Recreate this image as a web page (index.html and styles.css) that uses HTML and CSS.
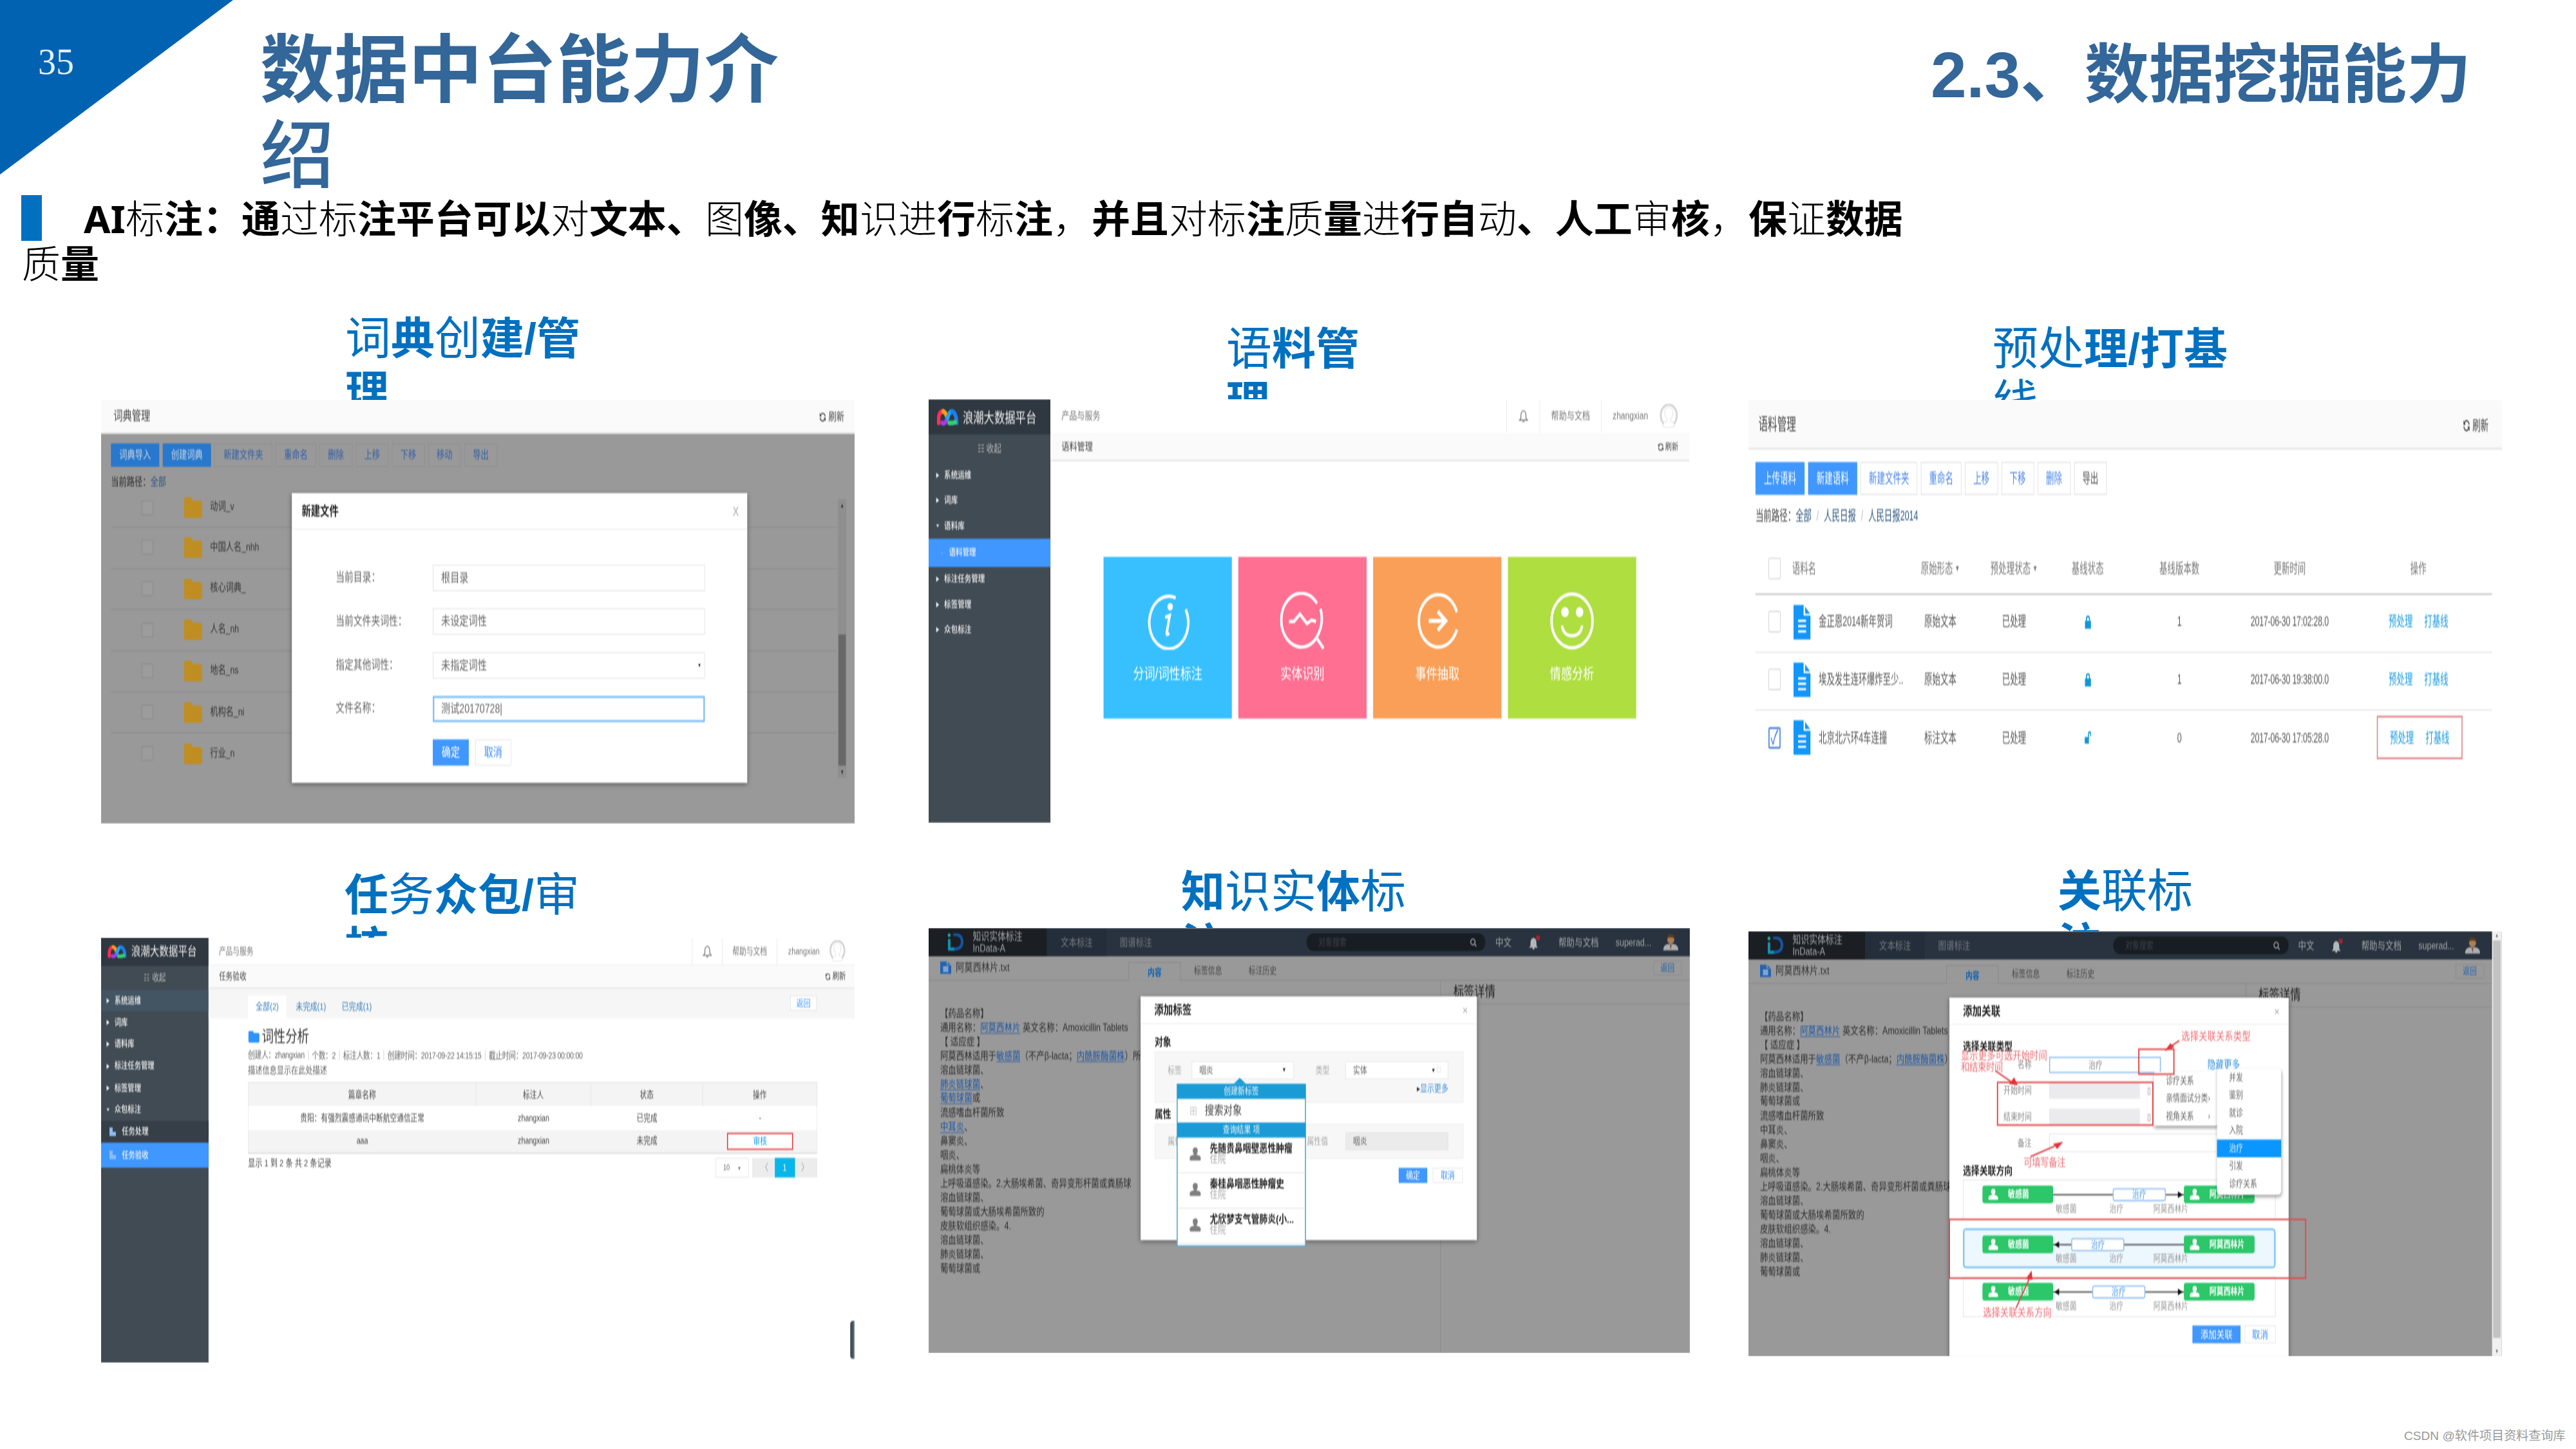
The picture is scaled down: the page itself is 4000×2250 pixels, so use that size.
FILE: index.html
```html
<!DOCTYPE html>
<html lang="zh-CN">
<head>
<meta charset="utf-8">
<title>数据中台能力介绍</title>
<link rel="stylesheet" href="styles.css">
</head>
<body>
<svg class="defs" width="0" height="0" aria-hidden="true">
  <symbol id="folder" viewBox="0 0 37 30"><path d="M0 4q0-4 4-4h9q3 0 4 3l1 2h15q4 0 4 4v17q0 4-4 4H4q-4 0-4-4z" fill="currentColor"/></symbol>
  <symbol id="refresh" viewBox="0 0 16 16"><path d="M14 7A6 6 0 0 0 3 4.500M2 9a6 6 0 0 0 11 2.500" fill="none" stroke="currentColor" stroke-width="2"/><path d="M1 1v6h5zM15 15V9h-5z" fill="currentColor"/></symbol>
  <symbol id="bell" viewBox="0 0 20 20"><path d="M10 2q-5 1-5 7v4l-3 3h16l-3-3V9q0-6-5-7zM8 18h4" fill="none" stroke="currentColor" stroke-width="1.600"/></symbol>
  <symbol id="bellfull" viewBox="0 0 24 22"><path d="M11 4q-6 1-6 8v4l-3 3h18l-3-3v-4q0-7-6-8z" fill="#b4b8bb"/><circle cx="11" cy="20" r="2" fill="#b4b8bb"/><circle cx="20" cy="4" r="4" fill="#a8232f"/></symbol>
  <symbol id="avatar" viewBox="0 0 40 36" preserveAspectRatio="none"><circle cx="20" cy="17" r="16" fill="#fff" stroke="#d2d2d2" stroke-width="3.500"/><path d="M8 33q2-7 8-7v-4q-5-4-4-11 2-6 8-6t8 6q1 7-4 11v4q6 0 8 7-12 4-24 0z" fill="#fff" stroke="#ddd"/></symbol>
  <symbol id="brand" viewBox="0 0 44 26" preserveAspectRatio="none"><g fill="none" stroke-width="7" stroke-linecap="round"><path d="M4 21V14Q5 4 13 4" stroke="#ff2f55"/><path d="M13 4q6 2 8 10" stroke="#ff9c1a"/><path d="M11 21q6 3 10-7" stroke="#a03df0"/><path d="M22 14q3-10 9-10" stroke="#18a8f5"/><path d="M31 4q8 2 9 17" stroke="#1c7ff0"/><path d="M25 21q6 1 12-1" stroke="#35d06c"/></g></symbol>
  <symbol id="idlogo" viewBox="0 0 34 28" preserveAspectRatio="none"><path d="M4 9v16h12q14-1 14-12Q29 2 16 2h-4" fill="none" stroke="#1456a3" stroke-width="5"/><path d="M4 9v16h10" fill="none" stroke="#1393ad" stroke-width="5"/><circle cx="4" cy="3" r="3" fill="#1fa89b"/></symbol>
  <symbol id="man" viewBox="0 0 32 28" preserveAspectRatio="none"><path d="M1 27q0-9 9-10h12q9 1 9 10z" fill="#aaaeb0"/><circle cx="16" cy="10" r="7" fill="#a8805c"/><path d="M8 9q0-8 8-8t8 8q-8-5-16 0z" fill="#5b3a1e"/><path d="M14 18h4l-2 8z" fill="#8f4530"/></symbol>
  <symbol id="doc" viewBox="0 0 34 39" preserveAspectRatio="none"><path d="M0 0h20v12h14v27H0z" fill="currentColor"/><path d="M23 2l10 8H23z" fill="currentColor"/><path d="M9 18h16M9 24h16M9 30h16" stroke="#fff" stroke-width="2.500"/></symbol>
  <symbol id="person" viewBox="0 0 24 20" preserveAspectRatio="none"><path d="M12 0q5 0 5 5 0 4-3 6 9 1 9 5v2q0 2-2 2H3q-2 0-2-2v-2q0-4 9-5-3-2-3-6 0-5 5-5z" fill="currentColor"/></symbol>
</svg>

<main class="slide">
  <header class="head">
    <div class="corner"><span>35</span></div>
    <h1>数据中台能力介<br><i>绍</i></h1>
    <h2>2.3、数据挖掘能力</h2>
  </header>

  <p class="intro">AI<i>标</i>注<span class="mid">：</span>通<i>过标</i>注平台可以<i>对</i>文本、<i>图</i>像、知<i>识进</i>行<i>标</i>注<i>，</i>并且<i>对标</i>注<i>质</i>量<i>进</i>行自<i>动</i>、人工<i>审</i>核<i>，</i>保<i>证</i>数据<br><i>质</i>量</p>

  <section class="gallery">

    <figure class="fig-dict">
      <figcaption><i>词</i>典<i>创</i>建/管<br>理</figcaption>
      <div class="frame"><div class="screen dict">
        <div class="pagebar"><span>词典管理</span><span class="refresh"><svg><use href="#refresh"/></svg>刷新</span></div>
        <div class="tools">
          <b>词典导入</b><b>创建词典</b><span class="w5">新建文件夹</span><span class="w3">重命名</span><span>删除</span><span>上移</span><span>下移</span><span>移动</span><span>导出</span>
        </div>
        <div class="path">当前路径：<em>全部</em></div>
        <div class="listwrap">
          <ul class="folders">
            <li><s></s><svg><use href="#folder"/></svg>动词_v<u>0</u></li>
            <li><s></s><svg><use href="#folder"/></svg>中国人名_nhh<u>0</u></li>
            <li><s></s><svg><use href="#folder"/></svg>核心词典_<u>0</u></li>
            <li><s></s><svg><use href="#folder"/></svg>人名_nh<u>0</u></li>
            <li><s></s><svg><use href="#folder"/></svg>地名_ns<u>0</u></li>
            <li><s></s><svg><use href="#folder"/></svg>机构名_ni<u>0</u></li>
            <li><s></s><svg><use href="#folder"/></svg>行业_n<u>0</u></li>
          </ul>
          <div class="scroll"><span>▲</span><b></b><span>▼</span></div>
        </div>
        <div class="modal">
          <div class="modal-head"><b>新建文件</b><span>X</span></div>
          <div class="form">
            <label>当前目录：<span>根目录</span></label>
            <label>当前文件夹词性：<span>未设定词性</span></label>
            <label>指定其他词性：<span>未指定词性<small>▼</small></span></label>
            <label>文件名称：<span class="focus">测试20170728|</span></label>
            <div class="acts"><b>确定</b><span>取消</span></div>
          </div>
        </div>
      </div></div>
    </figure>

    <figure class="fig-corpus">
      <figcaption><i>语</i>料管<br>理</figcaption>
      <div class="frame"><div class="screen console corpus">
        <aside>
          <div class="brand"><svg><use href="#brand"/></svg>浪潮大数据平台</div>
          <div class="fold">☷ 收起</div>
          <ul>
            <li>系统运维</li><li>词库</li><li class="open">语料库</li><li class="on"><small>▫</small>语料管理</li><li>标注任务管理</li><li>标签管理</li><li>众包标注</li>
          </ul>
        </aside>
        <div class="main">
          <div class="topbar"><span>产品与服务</span><span class="bell"><svg><use href="#bell"/></svg></span><span class="help">帮助与文档</span><span class="user">zhangxian<svg><use href="#avatar"/></svg></span></div>
          <div class="pagebar"><span>语料管理</span><span class="refresh"><svg><use href="#refresh"/></svg>刷新</span></div>
          <div class="tiles">
            <div class="blue"><svg viewBox="0 0 90 86" preserveAspectRatio="none"><path d="M62 9A39 39 0 1 0 82 26" transform="translate(-1 0)"/><path d="M40 38l9-3-6 26q0 4 5 0"/><circle cx="50" cy="22" r="3" class="dot"/></svg>分词/词性标注</div>
            <div class="pink"><svg viewBox="0 0 90 86" preserveAspectRatio="none"><path d="M74 17A40 40 0 1 0 73 68M81 25q8 22-8 43l14 16"/><path d="M18 44h10l12-11 14 14 9-5 9 2"/></svg>实体识别</div>
            <div class="orange"><svg viewBox="0 0 90 86" preserveAspectRatio="none"><path d="M84 30A39 39 0 1 0 84 56"/><path d="M28 43h34M46 29l16 14-16 14" class="thick"/></svg>事件抽取</div>
            <div class="green"><svg viewBox="0 0 90 86" preserveAspectRatio="none"><ellipse cx="45" cy="43" rx="41" ry="40"/><path d="M25 50q3 15 20 15t20-15"/><ellipse cx="31" cy="30" rx="5" ry="5" class="dot"/><ellipse cx="60" cy="30" rx="5" ry="5" class="dot"/></svg>情感分析</div>
          </div>
        </div>
      </div></div>
    </figure>

    <figure class="fig-base">
      <figcaption><i>预处</i>理/打基<br><i>线</i></figcaption>
      <div class="frame"><div class="screen base">
        <div class="pagebar"><span>语料管理</span><span class="refresh"><svg><use href="#refresh"/></svg>刷新</span></div>
        <div class="tools">
          <b>上传语料</b><b>新建语料</b><span class="w5">新建文件夹</span><span class="w3">重命名</span><span>上移</span><span>下移</span><span>删除</span><span class="dim">导出</span>
        </div>
        <div class="path">当前路径：<em>全部</em><q>/</q><em>人民日报</em><q>/</q><em>人民日报2014</em></div>
        <div class="grid ghead"><s></s><span>语料名</span><span>原始形态 <small>▼</small></span><span>预处理状态 <small>▼</small></span><span>基线状态</span><span>基线版本数</span><span>更新时间</span><span>操作</span></div>
        <div class="grid"><s></s><span><svg><use href="#doc"/></svg>金正恩2014新年贺词</span><span>原始文本</span><span>已处理</span><span><svg class="lock" viewBox="0 0 12 15"><path d="M0 6h12v9H0z"/><path d="M3 7V4q0-3 3-3t3 3v3" class="ring"/></svg></span><span>1</span><span class="time">2017-06-30 17:02:28.0</span><span class="ops"><em>预处理</em><em>打基线</em></span></div>
        <div class="grid"><s></s><span><svg><use href="#doc"/></svg>埃及发生连环爆炸至少..</span><span>原始文本</span><span>已处理</span><span><svg class="lock" viewBox="0 0 12 15"><path d="M0 6h12v9H0z"/><path d="M3 7V4q0-3 3-3t3 3v3" class="ring"/></svg></span><span>1</span><span class="time">2017-06-30 19:38:00.0</span><span class="ops"><em>预处理</em><em>打基线</em></span></div>
        <div class="grid"><s class="ticked">✓</s><span><svg><use href="#doc"/></svg>北京北六环4车连撞</span><span>标注文本</span><span>已处理</span><span><svg class="lock" viewBox="0 0 14 15"><path d="M0 7h9v8H0z"/><path d="M8 8V4q0-3 2.500-3T13 4v2" class="ring"/></svg></span><span>0</span><span class="time">2017-06-30 17:05:28.0</span><span class="ops boxed"><em>预处理</em><em>打基线</em></span></div>
      </div></div>
    </figure>

    <figure class="fig-task">
      <figcaption>任<i>务</i>众包/<i>审</i><br>核</figcaption>
      <div class="frame"><div class="screen console task">
        <aside>
          <div class="brand"><svg><use href="#brand"/></svg>浪潮大数据平台</div>
          <div class="fold">☷ 收起</div>
          <ul>
            <li class="hover">系统运维</li><li>词库</li><li>语料库</li><li>标注任务管理</li><li>标签管理</li><li class="open">众包标注</li><li class="sub"><small>▙</small>任务处理</li><li class="on"><small>▙</small>任务验收</li>
          </ul>
        </aside>
        <div class="main">
          <div class="topbar"><span>产品与服务</span><span class="bell"><svg><use href="#bell"/></svg></span><span class="help">帮助与文档</span><span class="user">zhangxian<svg><use href="#avatar"/></svg></span></div>
          <div class="pagebar"><span>任务验收</span><span class="refresh"><svg><use href="#refresh"/></svg>刷新</span></div>
          <div class="tabs"><b>全部(2)</b><span>未完成(1)</span><span>已完成(1)</span><button>返回</button></div>
          <div class="detail">
            <h3><svg><use href="#folder"/></svg>词性分析</h3>
            <p class="meta"><span>创建人：zhangxian</span><span>个数：2</span><span>标注人数：1</span><span>创建时间：2017-09-22 14:15:15</span><span>截止时间：2017-09-23 00:00:00</span></p>
            <p>描述信息显示在此处描述</p>
            <div class="trow th"><span>篇章名称</span><span>标注人</span><span>状态</span><span>操作</span></div>
            <div class="trow"><span>贵阳：有强烈震感通讯中断航空通信正常</span><span>zhangxian</span><span>已完成</span><span>-</span></div>
            <div class="trow alt"><span>aaa</span><span>zhangxian</span><span>未完成</span><span><mark>审核</mark></span></div>
            <div class="foot"><span>显示 1 到 2 条 共 2 条记录</span><span class="size">10 <small>▼</small></span><span class="pager">〈<b>1</b>〉</span></div>
          </div>
        </div>
        <div class="strip"></div>
      </div></div>
    </figure>

    <figure class="fig-entity">
      <figcaption>知<i>识实</i>体<i>标</i><br>注</figcaption>
      <div class="frame"><div class="screen reader entity">
        <nav><div class="idbox"><svg><use href="#idlogo"/></svg><span>知识实体标注<br>InData-A</span></div><span class="first">文本标注</span><span>图谱标注</span><div class="search">对象搜索<svg viewBox="0 0 16 16"><circle cx="7" cy="7" r="5"/><path d="M11 11l4 4"/></svg></div><span class="lang">中文</span><svg class="nb"><use href="#bellfull"/></svg><span class="nh">帮助与文档</span><span class="nu">superad...</span><svg class="man"><use href="#man"/></svg></nav>
        <div class="filebar"><div class="fname"><svg><use href="#doc"/></svg>阿莫西林片.txt</div><b>内容</b><span>标签信息</span><span>标注历史</span><button>返回</button></div>
        <div class="split">
          <div class="article">
            <p>【药品名称】</p><p>通用名称：<a>阿莫西林片</a> 英文名称：Amoxicillin Tablets</p><p>【 适应症 】</p><p>阿莫西林适用于<a>敏感菌</a>（不产β-lacta；<a>内酰胺酶菌株</a>）所</p><p>溶血链球菌、</p><p><a>肺炎链球菌</a>、</p><p><a>葡萄球菌</a>或</p><p>流感嗜血杆菌所致</p><p><a>中耳炎</a>、</p><p>鼻窦炎、</p><p>咽炎、</p><p>扁桃体炎等</p><p>上呼吸道感染。2.大肠埃希菌、奇异变形杆菌或粪肠球</p><p>溶血链球菌、</p><p>葡萄球菌或大肠埃希菌所致的</p><p>皮肤软组织感染。4.</p><p>溶血链球菌、</p><p>肺炎链球菌、</p><p>葡萄球菌或</p>
          </div>
          <div class="side">标签详情</div>
        </div>
        <div class="modal">
          <div class="modal-head"><b>添加标签</b><span>×</span></div>
          <h4>对象</h4>
          <div class="block two"><label>标签</label><span class="sel">咽炎<small>▼</small></span><label>类型</label><span class="sel">实体<small>▼ <q>□</q></small></span><div class="more">▸<em>显示更多</em></div></div>
          <h4>属性</h4>
          <div class="block one"><label>属性</label><span class="sel off"></span><label>属性值</label><span class="sel off">咽炎</span></div>
          <div class="acts"><b>确定</b><span>取消</span></div>
        </div>
        <div class="pop">
          <div class="pop-h">创建新标签</div>
          <div class="pop-s"><q>⊞</q>搜索对象</div>
          <div class="pop-h">查询结果 项</div>
          <div class="pop-i"><svg><use href="#person"/></svg><span><b>先随贵鼻咽壁恶性肿瘤</b><br>住院</span></div>
          <div class="pop-i"><svg><use href="#person"/></svg><span><b>秦桂鼻咽恶性肿瘤史</b><br>住院</span></div>
          <div class="pop-i"><svg><use href="#person"/></svg><span><b>尤欣梦支气管肺炎(小...</b><br>住院</span></div>
        </div>
      </div></div>
    </figure>

    <figure class="fig-link">
      <figcaption>关<i>联标</i><br>注</figcaption>
      <div class="frame"><div class="screen reader link">
        <nav><div class="idbox"><svg><use href="#idlogo"/></svg><span>知识实体标注<br>InData-A</span></div><span class="first">文本标注</span><span>图谱标注</span><div class="search">对象搜索<svg viewBox="0 0 16 16"><circle cx="7" cy="7" r="5"/><path d="M11 11l4 4"/></svg></div><span class="lang">中文</span><svg class="nb"><use href="#bellfull"/></svg><span class="nh">帮助与文档</span><span class="nu">superad...</span><svg class="man"><use href="#man"/></svg></nav>
        <div class="filebar"><div class="fname"><svg><use href="#doc"/></svg>阿莫西林片.txt</div><b>内容</b><span>标签信息</span><span>标注历史</span><button>返回</button></div>
        <div class="split">
          <div class="article">
            <p>【药品名称】</p><p>通用名称：<a>阿莫西林片</a> 英文名称：Amoxicillin Tablets</p><p>【 适应症 】</p><p>阿莫西林适用于<a>敏感菌</a>（不产β-lacta；<a>内酰胺酶菌株</a>）所</p><p>溶血链球菌、</p><p>肺炎链球菌、</p><p>葡萄球菌或</p><p>流感嗜血杆菌所致</p><p>中耳炎、</p><p>鼻窦炎、</p><p>咽炎、</p><p>扁桃体炎等</p><p>上呼吸道感染。2.大肠埃希菌、奇异变形杆菌或粪肠球</p><p>溶血链球菌、</p><p>葡萄球菌或大肠埃希菌所致的</p><p>皮肤软组织感染。4.</p><p>溶血链球菌、</p><p>肺炎链球菌、</p><p>葡萄球菌或</p>
          </div>
          <div class="side">标签详情</div>
        </div>
        <div class="modal">
          <div class="modal-head"><b>添加关联</b><span>×</span></div>
          <h4>选择关联类型</h4>
          <div class="frow"><label>名称</label><span class="name">治疗</span><em>隐藏更多</em></div>
          <div class="frow"><label>开始时间</label><span class="date"></span><q>▯</q></div>
          <div class="frow"><label>结束时间</label><span class="date"></span><q>▯</q></div>
          <div class="frow"><label>备注</label><span class="note"></span></div>
          <h4>选择关联方向</h4>
          <div class="rel">
            <div class="line"><b><svg><use href="#person"/></svg>敏感菌</b><i style="flex:121"></i><span>治疗</span><i class="r" style="flex:37"></i><b><svg><use href="#person"/></svg>阿莫西林片</b></div>
            <div class="cap"><span>敏感菌</span><span>治疗</span><span>阿莫西林片</span></div>
          </div>
          <div class="rel picked">
            <div class="line"><b><svg><use href="#person"/></svg>敏感菌</b><i class="l" style="flex:37"></i><span>治疗</span><i style="flex:121"></i><b><svg><use href="#person"/></svg>阿莫西林片</b></div>
            <div class="cap"><span>敏感菌</span><span>治疗</span><span>阿莫西林片</span></div>
          </div>
          <div class="rel">
            <div class="line"><b><svg><use href="#person"/></svg>敏感菌</b><i class="l" style="flex:79"></i><span>治疗</span><i class="r" style="flex:79"></i><b><svg><use href="#person"/></svg>阿莫西林片</b></div>
            <div class="cap"><span>敏感菌</span><span>治疗</span><span>阿莫西林片</span></div>
          </div>
          <div class="acts"><b>添加关联</b><span>取消</span></div>
        </div>
        <ul class="menu m1"><li>诊疗关系</li><li>亲情面试分类›</li><li>视角关系<q>›</q></li></ul>
        <ul class="menu m2"><li>并发</li><li>鉴别</li><li>就诊</li><li>入院</li><li class="on">治疗</li><li>引发</li><li>诊疗关系</li></ul>
        <svg class="notes" viewBox="32 113.500 1503 647">
          <g fill="none" stroke="#e2494c" stroke-width="2.500">
            <path d="M811 293h70v38h-70zM529 343.500h310v65H529zM433 552h711v89.500H433z"/>
            <path d="M892 280l-20 10M525 326l32 17M595 456.500l48-16M566 687l26-44"/>
          </g>
          <path d="M862 296l12-12 8 6zM570 348l-18-2 10-10zM660 434l-12 11-8-8zM597 630l2 14-14-1z" fill="#e2343a"/>
          <g class="notetext">
            <text x="896" y="279" textLength="138">选择关联关系类型</text>
            <text x="456" y="309" textLength="172">显示更多可选开始时间</text>
            <text x="456" y="326.500" textLength="84">和结束时间</text>
            <text x="581" y="471" textLength="84">可填写备注</text>
            <text x="500" y="700" textLength="137">选择关联关系方向</text>
          </g>
        </svg>
        <div class="vbar"><span>▲</span><b></b><span>▼</span></div>
      </div></div>
    </figure>

  </section>
  <footer>CSDN @软件项目资料查询库</footer>
</main>
</body>
</html>
```
FILE: styles.css
```css
* { box-sizing: border-box; }
body { margin: 0; background: #fff; font-family: "Liberation Sans", "Noto Sans CJK SC", sans-serif; }
ul, p, h1, h2, h3, h4, figure { margin: 0; padding: 0; }
ul { list-style: none; }
i, em { font-style: normal; }
s, u, a { text-decoration: none; }
q { quotes: none; }
q::before, q::after { content: none; }
.defs { position: absolute; }

.slide { width: 4000px; height: 2250px; overflow: hidden; display: flex; flex-direction: column; white-space: nowrap; }

/* heading */
.head { height: 303px; flex: none; display: flex; align-items: flex-start; color: #336699; }
.corner { width: 362px; height: 271px; background: #0062b1; clip-path: polygon(0 0, 100% 0, 0 100%); padding: 64px 0 0 59px; font: 56px/64px "Liberation Serif", serif; color: #e4effa; }
h1 { margin: 43px 0 0 42px; font-size: 115px; line-height: 133px; font-weight: 700; }
h1 i { font-weight: 500; }
h2 { margin: 56px 163px 0 auto; font-size: 100px; line-height: 120px; font-weight: 700; }

.intro { height: 157px; flex: none; padding: 1px 0 0 34px; text-indent: 96px; font: 700 60px/70px "Noto Sans", "Noto Sans CJK SC", sans-serif; color: #000; background: linear-gradient(#0070c0, #0070c0) 33px 0 / 32px 71px no-repeat; }
.intro i { font-weight: 300; }
.intro .mid { font-family: "Noto Sans CJK TC", sans-serif; line-height: 0; }

/* gallery */
.gallery { display: grid; grid-template-columns: 1285px 1273px 1170px; grid-template-rows: 818px auto; row-gap: 52px; padding-left: 157px; }
figcaption { font-size: 68px; line-height: 82px; font-weight: 700; color: #0070c0; overflow: hidden; }
figcaption i { font-weight: 400; font-size: 71px; line-height: 0; }
.fig-dict figcaption { height: 161px; padding: 25px 0 0 379px; }
.fig-corpus figcaption { height: 160px; padding: 41px 0 0 462px; }
.fig-base figcaption { height: 161px; padding: 41px 0 0 379px; }
.fig-task figcaption { height: 126px; padding: 19px 0 0 378px; }
.fig-entity figcaption { height: 111px; padding: 14px 0 0 392px; }
.fig-link figcaption { height: 116px; padding: 13px 0 0 480px; }
.frame { width: 1170px; height: 660px; overflow: hidden; }
.fig-dict .frame { height: 658px; }
.fig-corpus .frame { width: 1181px; height: 658px; }
.fig-entity .frame { width: 1182px; }
.fig-base .frame { height: 600px; }

/* each screen is laid out at its own size and stretched into its frame */
.screen { position: relative; overflow: hidden; transform-origin: 0 0; filter: blur(.8px); font-size: 16px; line-height: 1.2; color: #555; }
.screen svg { flex: none; }
.dict { width: 1529px; height: 614px; transform: scale(.7653, 1.0714); background: #999; color: #333; }
.corpus { width: 1518px; height: 629px; transform: scale(.7781, 1.0459); }
.base { width: 1504px; height: 430px; transform: scale(.7781, 1.3776); background: #fff; }
.task { width: 1529px; height: 647px; transform: scale(.7653, 1.0204); }
.entity { width: 1519px; height: 647px; transform: scale(.7781, 1.0204); }
.link { width: 1503px; height: 647px; transform: scale(.7781, 1.0204); }

.pagebar { display: flex; justify-content: space-between; align-items: center; background: #fafafa; color: #444; font-size: 18.7px; border-bottom: 2px solid #e4e4e4; }
.refresh { display: flex; align-items: center; gap: 4px; font-size: 16px; }
.refresh svg { width: 16px; height: 14px; }
.tools { display: flex; gap: 7px; }
.tools b, .tools span { width: 66.500px; display: flex; align-items: center; justify-content: center; font-weight: 400; font-size: 16px; }
.tools b { width: 98px; background: #3f97ff; color: #fff; }
.tools .w5 { width: 114px; }
.tools .w3 { width: 82px; }
.acts { display: flex; }
.acts b { background: #3f97ff; color: #fff; font-weight: 400; display: flex; align-items: center; justify-content: center; }
.acts span { border: 1px solid #e2e2e2; color: #3f8ef5; display: flex; align-items: center; justify-content: center; }
.modal { position: absolute; background: #fff; box-shadow: 0 2px 8px rgba(0, 0, 0, .4); color: #555; }
.modal-head { display: flex; justify-content: space-between; align-items: center; border-bottom: 1px solid #e8e8e8; color: #222; font-size: 18.7px; }
.modal-head span { color: #aaa; }

/* dictionary */
.dict .pagebar { height: 49px; padding: 2px 21px 0 25px; }
.dict .tools { margin: 14px 0 0 20px; height: 34px; }
.dict .tools span { border: 1px solid #8e8e8e; color: #2f5fa8; }
.dict .tools .w5 { width: 117px; }
.dict .tools b { background: #2878cd; color: #c8d4e2; }
.dict .path { margin: 12px 0 0 20px; height: 20px; font-size: 16px; color: #2a2a2a; }
.path em { color: #2c5580; }
.listwrap { display: flex; height: 420px; }
.folders { width: 1473px; margin-left: 20px; }
.folders li { height: 59.700px; display: flex; align-items: center; border-bottom: 1px solid #888; color: #333; padding: 0 182px 4px 62px; }
.folders li:first-child { height: 56px; }
.folders li:last-child { border: 0; }
.folders s { width: 24px; height: 21px; border: 1px solid #858585; border-radius: 2px; margin: 3px 62px 0 0; background: #9c9c9c; }
.folders svg { width: 37px; height: 30px; color: #c08d22; margin: 3px 16px 0 0; }
.folders u { margin-left: auto; }
.scroll { width: 17px; height: 404px; margin: 15px 0 0 2px; background: #8f8f8f; display: flex; flex-direction: column; align-items: center; font-size: 9px; }
.scroll b { width: 15px; height: 190px; background: #686868; margin-top: auto; }
.scroll span { height: 18px; line-height: 18px; }
.dict .modal { left: 387px; top: 135px; width: 924px; height: 420px; }
.dict .modal-head { height: 53px; padding: 2px 17px 0 20px; }
.form { padding: 51px 86px 0 89px; display: grid; row-gap: 25.300px; }
.form label { display: grid; grid-template-columns: 197px 552px; align-items: center; height: 38px; font-size: 18px; color: #666; }
.form label span { height: 38px; border: 1px solid #ddd; padding: 0 16px; display: flex; align-items: center; justify-content: space-between; font-size: 18.500px; }
.form small { font-size: 8px; color: #222; margin-right: -10px; }
.form .focus { border: 3px solid #7fbdf5; padding: 0 14px; }
.form .acts { margin-left: 197px; gap: 13px; height: 38px; font-size: 18.500px; }
.form .acts b, .form .acts span { width: 73px; }

/* console shell */
.console { display: flex; background: #fff; }
.console aside { flex: none; background: #414b54; color: #fff; }
.brand { display: flex; align-items: center; background: #2f3740; color: #eee; }
.fold { text-align: center; color: #bbb; }
.console li { display: flex; align-items: center; font-size: 13.500px; font-weight: 500; color: #f2f2f2; }
.console li::before { content: ""; border: 4px solid transparent; border-left: 6px solid #eee; border-right: 0; margin-right: 10px; }
.console li.open::before { border: 3px solid transparent; border-top: 4px solid #eee; border-bottom: 0; }
.console li.on, .console li.sub { background: #3f97ff; }
.console li.on::before, .console li.sub::before { display: none; }
.console li small { font-size: 13px; margin-right: 12px; color: #8ebcf0; }
.main { flex: 1; min-width: 0; }
.topbar { display: flex; background: #fff; color: #777; }
.topbar > span { display: flex; align-items: center; }
.topbar .bell { margin-left: auto; justify-content: center; }
.topbar > span + span { border-left: 1px solid #e6e6e6; }
.topbar .help { justify-content: center; }
.bell svg { width: 22px; height: 20px; }

.corpus aside { width: 243px; }
.corpus .brand { height: 52px; padding: 2px 0 0 16px; font-size: 21px; gap: 8px; }
.corpus .brand svg { width: 44px; height: 26px; }
.corpus .fold { height: 42px; line-height: 42px; font-size: 15px; }
.corpus li { height: 37.500px; padding-left: 15px; }
.corpus li.on { height: 42px; padding-left: 24px; }
.corpus .topbar { height: 50px; padding-left: 22px; font-size: 15.500px; }
.corpus .bell { width: 66px; }
.corpus .help { width: 123px; }
.corpus .user { width: 176px; padding-left: 22px; }
.corpus .user svg { width: 40px; height: 36px; margin-left: auto; margin-right: 21px; }
.corpus .pagebar { height: 42px; padding: 2px 22px 0; font-size: 15.700px; }
.corpus .refresh { font-size: 13px; gap: 3px; }
.corpus .refresh svg { width: 12px; height: 12px; }
.tiles { display: flex; gap: 13px; padding: 142px 0 0 106px; }
.tiles div { width: 256px; height: 240px; display: flex; flex-direction: column; align-items: center; color: #fff; font-size: 22px; padding-top: 52px; gap: 23px; line-height: 26px; }
.tiles svg { width: 90px; height: 86px; fill: none; stroke: #fff; stroke-width: 5; }
.tiles .dot { fill: #fff; }
.tiles .thick { stroke-width: 6; }
.blue { background: #37c0fd; }
.pink { background: #ff6f92; }
.orange { background: #fa9f58; }
.green { background: #aede3f; }

/* corpus table */
.base .pagebar { height: 56px; padding: 3px 27px 0 20px; }
.base .tools { margin: 14px 0 0 14px; height: 37px; }
.base .tools span { width: 65.500px; border: 1px solid #ddd; color: #4a86e8; }
.base .tools .w5 { width: 113px; }
.base .tools .w3 { width: 81px; }
.base .tools .dim { color: #555; }
.base .path { height: 20px; margin: 14px 0 24px 14px; color: #444; }
.base .path q { color: #bbb; margin: 0 10px; }
.grid { display: grid; grid-template-columns: 73px 227px 138px 156px 138px 228px 212px 302px; width: 1470px; height: 65px; padding-bottom: 4px; margin-left: 14px; align-items: center; border-bottom: 1px solid #ddd; color: #555; font-size: 16px; }
.grid:last-child { border: 0; }
.grid > span { display: flex; align-items: center; justify-content: center; }
.grid > span:nth-of-type(1) { justify-content: flex-start; gap: 16px; padding-left: 3px; }
.grid > s { width: 24px; height: 24px; border: 1px solid #ccc; border-radius: 2px; margin-left: 26px; line-height: 24px; text-align: center; }
.grid .ticked { border: 2px solid #3b78d8; color: #2f6fe0; font-size: 22px; line-height: 20px; }
.grid svg { width: 34px; height: 39px; color: #1296fb; }
.grid .lock { width: 13px; height: 15px; fill: #1296db; }
.grid .ring { fill: none; stroke: #1296db; stroke-width: 2; }
.grid small { font-size: 10px; margin-left: 4px; }
.grid .time { letter-spacing: -.3px; }
.ghead { height: 55px; border-bottom: 2px solid #ccc; color: #777; }
.ghead > span:nth-of-type(1) { padding-left: 0; }
.grid .ops { gap: 23px; color: #1a9be0; }
.grid .boxed { width: 171px; height: 49px; border: 2px solid #e08088; justify-self: center; margin-left: 5px; }

/* task review */
.task aside { width: 218px; }
.task .brand { height: 43px; padding-left: 13px; font-size: 19px; gap: 9px; }
.task .brand svg { width: 39px; height: 21px; }
.task .fold { height: 36px; line-height: 36px; font-size: 14px; }
.task li { height: 33.300px; padding-left: 11px; }
.task li.hover { background: #435463; }
.task li.sub { background: #363f48; padding-left: 17px; }
.task li.on { height: 38px; padding-left: 17px; }
.task .topbar { height: 42px; padding-left: 21px; font-size: 14px; border-bottom: 1px solid #e8e8e8; }
.task .bell { width: 61px; }
.task .help { width: 111px; }
.task .user { width: 158px; padding-left: 22px; }
.task .user svg { width: 36px; height: 33px; margin-left: auto; margin-right: 17px; }
.task .pagebar { height: 36px; padding: 0 18px 0 21px; font-size: 14px; }
.task .refresh { font-size: 13.500px; gap: 3px; }
.task .refresh svg { width: 13px; height: 11px; }
.tabs { height: 45px; background: #f6f6f6; padding: 10px 77px 0 80px; display: flex; color: #337ab7; font-size: 14.500px; line-height: 35px; }
.tabs b { width: 78px; background: #fff; font-weight: 400; text-align: center; }
.tabs span { margin-left: 19px; width: 74px; }
.tabs button { margin-left: auto; width: 54px; height: 23px; border: 1px solid #ddd; background: #fff; color: #3f97ff; font: inherit; line-height: 20px; padding: 0; }
.detail { padding: 12px 76px 0 80px; font-size: 14px; }
.detail h3 { font-size: 24px; font-weight: 400; line-height: 32px; color: #333; display: flex; align-items: center; gap: 4px; }
.detail h3 svg { width: 24px; height: 18px; color: #2f93ff; }
.detail p { height: 25px; line-height: 25px; margin-top: -1px; font-size: 14.600px; color: #666; }
.detail .meta { margin-top: -1px; font-size: 14px; letter-spacing: -.4px; display: flex; }
.meta span + span { border-left: 1px solid #ccc; margin-left: 7px; padding-left: 7px; line-height: 16px; height: 16px; margin-top: 5px; }
.trow { display: grid; grid-template-columns: 462px 233px 227px 232px; height: 36.300px; align-items: center; text-align: center; font-size: 14px; border-left: 1px solid #e8e8e8; border-right: 1px solid #e8e8e8; color: #444; }
.trow.th { background: #f4f4f4; border-top: 1px solid #ddd; margin-top: 5px; }
.th span { border-right: 1px solid #e2e2e2; line-height: 36px; }
.trow.alt { background: #f4f4f4; border-bottom: 2px solid #ddd; }
.trow mark { display: inline-block; width: 134px; height: 26px; line-height: 22px; border: 2px solid #e2383c; background: #fff; color: #1a9fe0; }
.foot { display: flex; padding-top: 6px; font-size: 14.600px; color: #444; }
.foot > span:first-child { margin-right: auto; }
.size { width: 67px; height: 30px; border: 1px solid #e2e2e2; line-height: 28px; text-align: center; color: #666; margin-right: 7px; font-size: 12px; }
.size small { font-size: 8px; margin-left: 12px; }
.pager { width: 132px; height: 30px; background: #ececec; display: flex; line-height: 30px; justify-content: space-between; padding: 0 18px; color: #999; }
.pager b { width: 41px; background: #09b6ea; color: #fff; text-align: center; font-weight: 400; }
.strip { position: absolute; right: 0; top: 583px; width: 9px; height: 58px; background: linear-gradient(90deg, #3b4354, #4b5560 60%, #7fa08a); border-radius: 5px 0 0 5px; }

/* annotation reader */
.reader { background: #999; color: #222; }
.reader nav { height: 43px; background: #28333f; display: flex; align-items: center; color: #73797f; font-size: 16px; }
.idbox { align-self: stretch; background: #1b1e23; display: flex; align-items: center; gap: 17px; padding-left: 37px; color: #a3a6a9; font-size: 16.500px; line-height: 17px; }
.idbox svg { width: 34px; height: 27px; }
nav .first { width: 119px; align-self: stretch; line-height: 43px; text-align: center; background: #232e3a; }
nav > span { text-align: center; width: 117px; }
.search { height: 27px; border-radius: 14px; background: #181d23; display: flex; align-items: center; justify-content: space-between; padding: 0 16px 0 24px; font-size: 14px; color: #3d4247; }
.search svg { width: 16px; height: 14px; fill: none; stroke: #a5a8ab; stroke-width: 2; }
.reader nav .lang, .reader nav .nh, .reader nav .nu { width: auto; color: #a0a4a8; }
nav .nb { width: 28px; height: 22px; margin: 0 35px 0 31px; }
nav .nu { margin-left: 34px; font-size: 16px; }
nav .man { width: 32px; height: 27px; margin-left: auto; }
.filebar { height: 37px; display: flex; align-items: center; border-bottom: 1px solid #858585; font-size: 14px; color: #444; }
.fname { display: flex; align-items: center; gap: 9px; padding-left: 23px; font-size: 17px; color: #333; }
.fname svg { width: 22px; height: 19px; color: #2463b0; }
.filebar b { width: 104px; height: 28px; align-self: flex-end; border: 1px solid #868686; border-bottom: 0; text-align: center; line-height: 30px; color: #0c5fb0; margin-bottom: -1px; background: #999; }
.filebar > span { width: 109px; text-align: center; padding-top: 8px; }
.filebar button { margin-left: auto; width: 57px; height: 22px; background: none; border: 1px solid #8a8a8a; color: #2160a8; font: inherit; padding: 0; border-radius: 3px; }
.split { display: flex; height: 567px; }
.article { flex: none; overflow: hidden; padding: 39px 0 0 23px; font-size: 16px; color: #2c2c2c; }
.article p { height: 21.580px; line-height: 21.580px; }
.article a { color: #1d57a5; border-bottom: 1px solid #1d57a5; }
.side { flex: 1; border-left: 1px solid #878787; font-size: 21px; padding-left: 25px; height: 100%; line-height: 33px; background: linear-gradient(#878787, #878787) 0 35px / 100% 1px no-repeat; }
h4 { font-size: 16.500px; line-height: 20px; color: #222; }

.entity .idbox { width: 236px; }
.entity .search { width: 357px; margin-left: 282px; margin-right: 20px; }
.entity .man { margin-right: 22px; }
.entity .fname { width: 399px; }
.entity .filebar button { margin-right: 16px; }
.entity .article { width: 1021px; }
.entity .modal { left: 423px; top: 104px; width: 671px; height: 371px; padding: 0 28px; }
.entity .modal-head { height: 42px; margin: 0 -28px 17px; padding: 2px 18px 0 27px; }
.block { background: #f7f7f7; border: 1px solid #ececec; display: grid; grid-template-columns: 48px 204px 58px 45px 205px; align-items: center; padding-left: 25px; margin-left: 0; font-size: 14px; color: #aaa; width: 616px; }
.block > :nth-child(3) { margin-left: 43px; }
.block > :nth-child(2) { grid-column: 2; }
.block > :nth-child(4) { grid-column: 5; }
.block.two { height: 78px; margin: 5px 0 7px; grid-template-rows: 28px 28px; padding-top: 13px; }
.block.one { height: 53px; margin: 5px 0 14px; }
.block.one > :nth-child(3) { margin-left: 26px; white-space: nowrap; }
.sel { height: 27px; border: 1px solid #e2e2e2; background: #fff; display: flex; align-items: center; justify-content: space-between; padding: 0 14px; color: #666; }
.sel small { font-size: 9px; color: #222; }
.sel q { color: #ccc; font-size: 13px; }
.sel.off { background: #ebebeb; }
.more { grid-column: 5; text-align: right; color: #333; }
.more em { color: #3b8fd8; }
.entity .acts { justify-content: flex-end; gap: 11px; height: 23px; font-size: 14px; }
.entity .acts b { width: 57px; }
.entity .acts span { width: 60px; }
.pop { position: absolute; left: 495px; top: 237px; width: 258px; height: 248px; background: #fff; border: 2px solid #4ea3cf; border-top: 0; }
.pop::before { content: ""; position: absolute; left: 112px; top: -9px; border: 12px solid transparent; border-bottom: 9px solid #1b9bd6; border-top: 0; }
.pop-h { height: 23px; background: #1b9bd6; color: #eaf6fc; text-align: center; line-height: 23px; font-size: 14px; margin: 0 -1px; }
.pop-s { height: 36px; display: flex; align-items: center; gap: 15px; padding-left: 23px; font-size: 18.500px; color: #444; }
.pop-s q { color: #ccc; }
.pop-i { height: 54px; display: flex; align-items: center; gap: 17px; padding: 0 0 4px 23px; border-bottom: 1px solid #ddd; line-height: 16px; color: #aaa; }
.pop-i b { color: #222; font-size: 16.500px; }
.pop-i svg { width: 24px; height: 20px; color: #808080; }

.link .idbox { width: 233px; }
.link nav, .link .filebar, .link .split { width: 1484px; }
.link .search { width: 350px; margin-left: 259px; margin-right: 19px; }
.link .man { margin-right: 23px; }
.link .fname { width: 395px; }
.link .filebar button { margin-right: 16px; }
.link .article { width: 992px; }
.link .modal { left: 401px; top: 101px; width: 677px; height: 560px; padding: 0 27px; }
.link .modal-head { height: 41px; margin: 0 -27px 23px; padding: 2px 18px 0 27px; }
.frow { display: flex; align-items: center; height: 40px; color: #888; font-size: 14px; }
.link h4 + .frow { height: 37px; }
.frow label { width: 137px; text-align: right; margin-right: 35px; }
.frow .name { width: 223px; height: 25px; border: 2px solid #8fbdee; text-align: center; line-height: 22px; padding-right: 38px; }
.frow em { color: #2f8fdf; margin-left: 93px; font-size: 16.200px; }
.frow .date { width: 181px; height: 25px; background: #ebebed; }
.frow q { margin-left: 14px; }
.frow .note { width: 451px; height: 28px; border: 1px solid #ddd; }
.link h4:nth-of-type(2) { margin: 12px 0 4px; }
.rel { width: 624px; height: 61px; border: 1px solid #ddd; padding: 8px 41px 0 38px; margin-bottom: 13px; }
.rel.picked { border: 3px solid #7cc5f2; border-radius: 6px; background: #edf7fe; padding: 8px 39px 0 36px; }
.line { display: flex; align-items: center; height: 27px; }
.line b { width: 141px; height: 27px; background: #2bc769; border-radius: 4px; color: #fff; display: flex; align-items: center; font-size: 14px; gap: 19px; padding-left: 11px; }
.line b svg { width: 21px; height: 17px; }
.line span { width: 106px; height: 20px; border: 2px solid #93bfef; border-radius: 4px; background: #fff; text-align: center; color: #4d9ae6; font-size: 14px; line-height: 16px; }
.line i { height: 2px; background: #444; position: relative; }
.line .l::before, .line .r::after { content: ""; position: absolute; top: -4px; border: 5px solid transparent; }
.line .l::before { left: 2px; border-right: 10px solid #111; border-left: 0; }
.line .r::after { right: 2px; border-left: 10px solid #111; border-right: 0; }
.cap { display: grid; grid-template-columns: 107px 88px auto; padding-left: 146px; color: #999; font-size: 14px; line-height: 17px; }
.link .acts { justify-content: flex-end; gap: 8px; height: 27px; font-size: 16px; }
.link .acts b { width: 96px; }
.link .acts span { width: 62px; margin-right: -1px; }
.menu { position: absolute; background: #fff; box-shadow: 1px 3px 6px rgba(0, 0, 0, .35); font-size: 14px; color: #666; border-radius: 4px; }
.menu li { height: 27px; line-height: 27px; padding-left: 24px; }
.menu .on { background: #0a95ff; color: #e8f4ff; }
.m1 { left: 809px; top: 214px; width: 127px; height: 82px; }
.m1 q { margin-left: 28px; }
.m2 { left: 935px; top: 209px; width: 128px; height: 192px; border-radius: 6px; }
.notes { position: absolute; left: 0; top: 0; width: 1503px; height: 647px; }
.notetext { font: 17px "Noto Sans CJK SC", serif; fill: #ee6f75; }
.vbar { position: absolute; right: 0; top: 0; width: 19px; height: 647px; background: #f1f1f1; display: flex; flex-direction: column; align-items: center; font-size: 8px; color: #666; }
.vbar b { width: 15px; flex: 1; background: #c3c3c3; margin-bottom: 14px; }
.vbar span { height: 14px; line-height: 14px; }

footer { position: absolute; left: 3733px; top: 2214px; font: 19.100px/32px "Liberation Sans", "Noto Sans CJK SC", sans-serif; color: #999; }
```
